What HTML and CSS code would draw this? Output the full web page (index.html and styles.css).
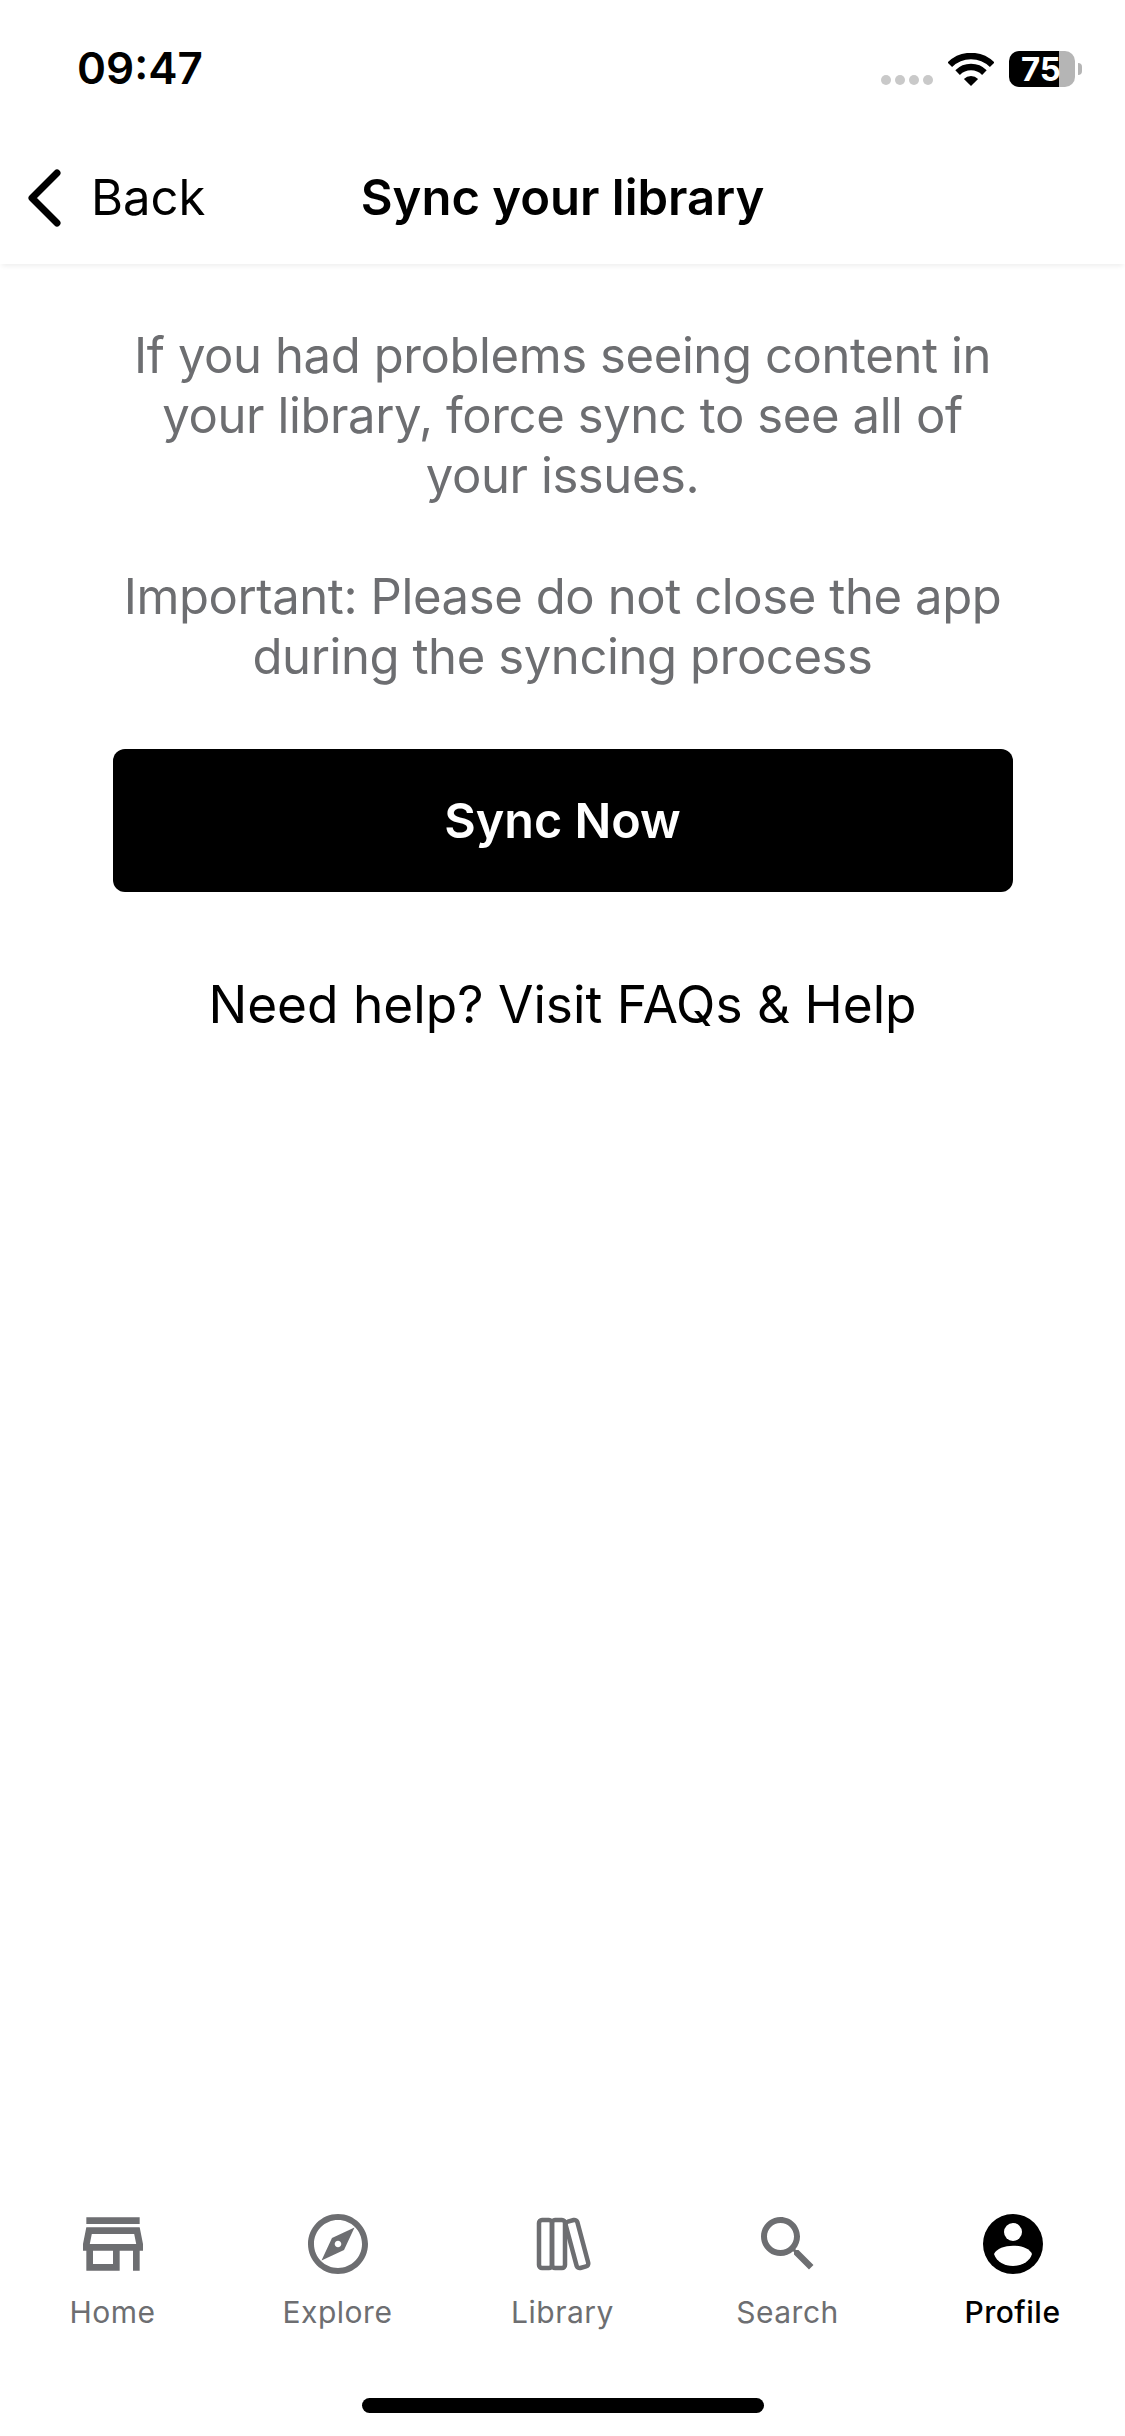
FILE: index.html
```html
<!DOCTYPE html>
<html>
<head>
<meta name="viewport" content="width=device-width, initial-scale=1">
<title>Sync your library</title>
<link rel="stylesheet" href="styles.css">
</head>

<body>
<div class="app">

  <div class="statusbar">
    <span class="time">09:47</span>
    <div class="status-right">
      <div class="dots"><i></i><i></i><i></i><i></i></div>
      <svg class="wifi" viewBox="0 0 46 33">
        <path d="M1.8 11.8A30 30 0 0 1 44.2 11.8" fill="none" stroke="#000" stroke-width="6.5"/>
        <path d="M9.6 19.6A19 19 0 0 1 36.4 19.6" fill="none" stroke="#000" stroke-width="6.5"/>
        <path d="M23 33L15.9 25.9A10 10 0 0 1 30.1 25.9Z" fill="#000"/>
      </svg>
      <div class="battery"><span class="battery-level">75</span></div>
      <div class="battery-cap"></div>
    </div>
  </div>

  <div class="navbar">
    <div class="back">
      <svg class="chevron" viewBox="0 0 36 58">
        <path d="M31 4L6 29L31 54" fill="none" stroke="#000" stroke-width="7" stroke-linecap="round" stroke-linejoin="round"/>
      </svg>
      <span>Back</span>
    </div>
    <div class="title">Sync your library</div>
  </div>

  <div class="content">
    <p class="info">If you had problems seeing content in<br>your library, force sync to see all of<br>your issues.</p>
    <p class="info">Important: Please do not close the app<br>during the syncing process</p>
    <button class="sync-btn">Sync Now</button>
    <p class="help">Need help? Visit FAQs &amp; Help</p>
  </div>

  <div class="tabbar">
    <div class="tab">
      <svg class="tab-icon" viewBox="1.2 1.2 21.6 21.6"><path d="M18.36 9l.6 3H5.04l.6-3h12.72M20 4H4v2h16V4zm0 3H4l-1 5v2h1v6h10v-6h4v6h2v-6h1v-2l-1-5zM6 18v-4h6v4H6z"/></svg>
      <span>Home</span>
    </div>
    <div class="tab">
      <svg class="tab-icon" viewBox="0 0 24 24"><path d="M12 2C6.48 2 2 6.48 2 12s4.48 10 10 10 10-4.48 10-10S17.52 2 12 2zm0 18c-4.41 0-8-3.59-8-8s3.59-8 8-8 8 3.59 8 8-3.59 8-8 8zm-5.5-2.5l7.51-3.49L17.5 6.5 9.99 9.99 6.5 17.5zm5.5-6.6c.61 0 1.1.49 1.1 1.1s-.49 1.1-1.1 1.1-1.1-.49-1.1-1.1.49-1.1 1.1-1.1z"/></svg>
      <span>Explore</span>
    </div>
    <div class="tab">
      <svg class="tab-icon" viewBox="0 0 72 72">
        <g fill="none" stroke="#6d6e71" stroke-width="4.5" stroke-linejoin="round">
          <rect x="12" y="12" width="13" height="48" rx="3"/>
          <rect x="25" y="12" width="13" height="48" rx="3"/>
          <rect x="44" y="12" width="12" height="48" rx="3" transform="rotate(-15 50 36)"/>
        </g>
      </svg>
      <span>Library</span>
    </div>
    <div class="tab">
      <svg class="tab-icon" viewBox="0 0 24 24"><path d="M15.5 14h-.79l-.28-.27C15.41 12.59 16 11.11 16 9.5 16 5.91 13.09 3 9.5 3S3 5.91 3 9.5 5.91 16 9.5 16c1.61 0 3.09-.59 4.23-1.57l.27.28v.79l5 4.99L20.49 19l-4.99-5zm-6 0C7.01 14 5 11.99 5 9.5S7.01 5 9.5 5 14 7.01 14 9.5 11.99 14 9.5 14z"/></svg>
      <span>Search</span>
    </div>
    <div class="tab active">
      <svg class="tab-icon" viewBox="0 0 72 72">
        <circle cx="36" cy="36" r="30" fill="#000"/>
        <circle cx="36" cy="24" r="9" fill="#fff"/>
        <path d="M17 46C22 35 50 35 55 46C50 62 22 62 17 46Z" fill="#fff"/>
      </svg>
      <span>Profile</span>
    </div>
  </div>

  <div class="home-bar"><div class="home-indicator"></div></div>

</div>
</body>
</html>
```

FILE: styles.css
```css
body {
    margin: 0;
    background-color: #fff;
    font-family: Inter, "Liberation Sans", Arial, sans-serif;
}

.app {
    width: 1125px;
    height: 2436px;
    display: flex;
    flex-direction: column;
    overflow: hidden;
}

/* status bar */
.statusbar {
    height: 136px;
    box-sizing: border-box;
    padding: 46px 43px 0 77px;
    display: flex;
    justify-content: space-between;
    align-items: flex-start;
}

.time {
    font-size: 44px;
    line-height: 44px;
    font-weight: 600;
    color: #000;
}

.status-right {
    display: flex;
    align-items: center;
    height: 36px;
    margin-top: 5px;
}

.dots {
    display: flex;
    gap: 4px;
    margin-right: 15px;
    padding-top: 22px;
}

.dots i {
    display: block;
    width: 10px;
    height: 10px;
    border-radius: 50%;
    background-color: #c9c9c9;
}

.wifi {
    width: 46px;
    height: 33px;
    margin-right: 15px;
}

.battery {
    width: 66px;
    height: 36px;
    border-radius: 10px;
    background: linear-gradient(to right, #000 50px, #b5b5b5 50px);
    display: flex;
    align-items: center;
}

.battery-level {
    margin-left: 12px;
    color: #fff;
    font-size: 33px;
    line-height: 36px;
    font-weight: 700;
}

.battery-cap {
    width: 4px;
    height: 12px;
    margin-left: 3px;
    border-radius: 0 6px 6px 0;
    background-color: #b5b5b5;
}

/* nav bar */
.navbar {
    height: 128px;
    box-sizing: border-box;
    padding-bottom: 5px;
    display: grid;
    grid-template-columns: 1fr auto 1fr;
    align-items: center;
    background-color: #fff;
    box-shadow: 0 4px 5px -2px rgba(0, 0, 0, 0.07);
}

.back {
    grid-column: 1;
    display: flex;
    align-items: center;
    gap: 29px;
    padding-left: 26px;
    font-size: 49px;
    color: #000;
}

.chevron {
    width: 36px;
    height: 58px;
}

.title {
    grid-column: 2;
    font-size: 49px;
    font-weight: 600;
    color: #000;
}

/* main */
.content {
    flex: 1;
    display: flex;
    flex-direction: column;
    align-items: center;
    padding-top: 62px;
}

.info {
    margin: 0 0 61px;
    font-size: 49px;
    line-height: 60px;
    letter-spacing: -0.4px;
    color: #6d6e71;
    text-align: center;
}

.sync-btn {
    width: 900px;
    height: 143px;
    margin-top: 1px;
    border: none;
    border-radius: 12px;
    background-color: #000;
    color: #fff;
    font-family: inherit;
    font-size: 48.5px;
    font-weight: 600;
    cursor: pointer;
}

.help {
    margin: 80px 0 0;
    font-size: 51.4px;
    line-height: 64px;
    color: #000;
}

/* tab bar */
.tabbar {
    display: grid;
    grid-template-columns: repeat(5, 225px);
}

.tab {
    display: flex;
    flex-direction: column;
    align-items: center;
    gap: 12px;
    font-size: 30px;
    line-height: 40px;
    letter-spacing: 0.5px;
    color: #6d6e71;
}

.tab-icon {
    width: 72px;
    height: 72px;
    fill: #6d6e71;
}

.tab.active {
    color: #000;
    font-weight: 500;
}

.home-bar {
    height: 104px;
    box-sizing: border-box;
    padding-top: 66px;
    display: flex;
    justify-content: center;
}

.home-indicator {
    width: 402px;
    height: 15px;
    border-radius: 8px;
    background-color: #000;
}
```
